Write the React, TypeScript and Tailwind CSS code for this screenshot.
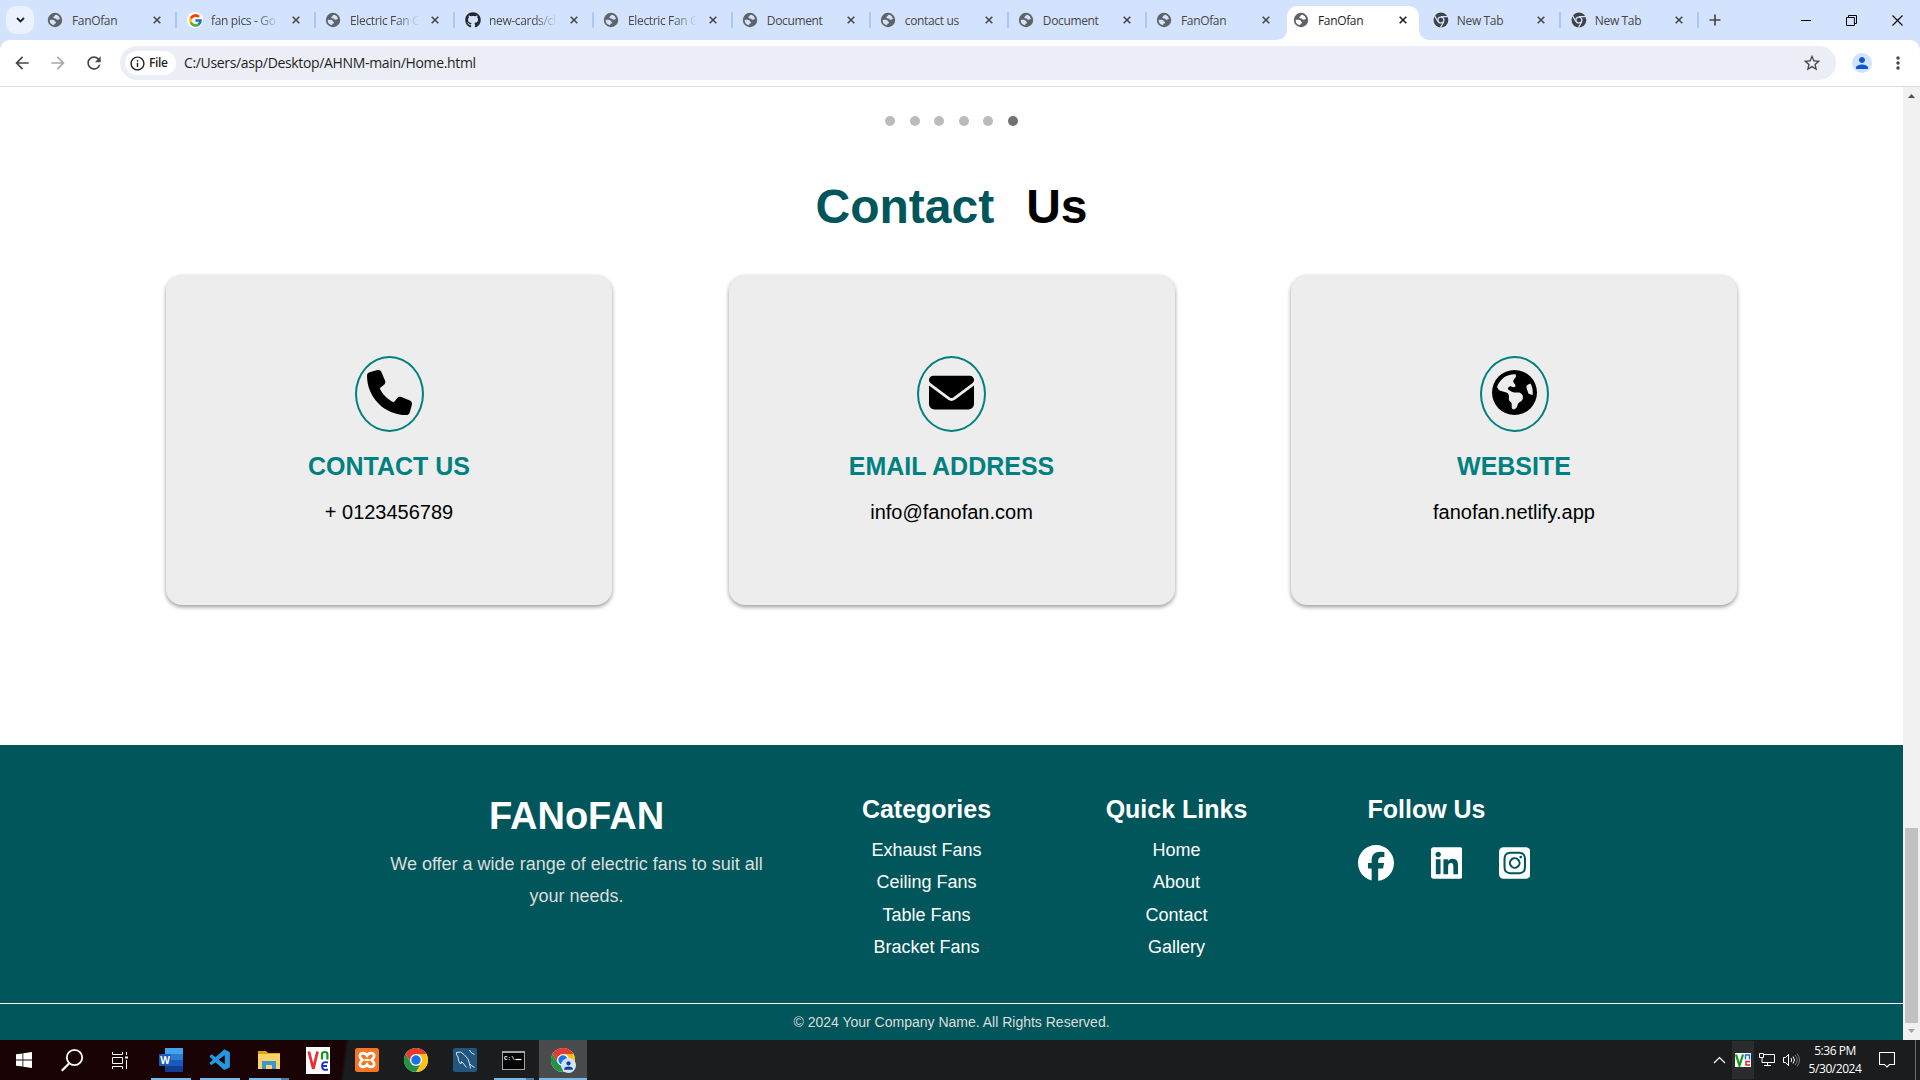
import React from "react";
import {
  FaPhone,
  FaEnvelope,
  FaEarthAmericas,
  FaFacebook,
  FaLinkedin,
  FaSquareInstagram,
} from "react-icons/fa6";
import { MdStarBorder, MdArrowBack, MdArrowForward, MdRefresh, MdInfoOutline, MdMoreVert, MdPerson } from "react-icons/md";
import { FaGithub } from "react-icons/fa";
import { FcGoogle } from "react-icons/fc";
import { VscVscode } from "react-icons/vsc";

const ui = "font-['Open_Sans','Noto_Sans',sans-serif]";

function CloseX({ dark }: { dark?: boolean }) {
  return (
    <svg width="8" height="8" viewBox="0 0 8 8" className={dark ? "text-[#1f1f1f]" : "text-[#474747]"}>
      <path d="M.7.7 7.3 7.3M7.3.7.7 7.3" stroke="currentColor" strokeWidth="1.6" />
    </svg>
  );
}

function ChromeGrey() {
  return (
    <svg width="16" height="16" viewBox="0 0 16 16">
      <circle cx="8" cy="8" r="7.5" fill="#3f4246" />
      <circle cx="8" cy="8" r="3" fill="#3f4246" stroke="#d3e3fd" strokeWidth="1.3" />
      <path d="M8 4.6h7M5.1 9.7 1.7 3.8M10.9 9.7l-3.4 6" stroke="#d3e3fd" strokeWidth="1.2" />
    </svg>
  );
}

function GlobeGrey({ land }: { land: string }) {
  return (
    <svg width="16" height="16" viewBox="0 0 16 16" className="-ml-px">
      <circle cx="8" cy="8" r="7.200" fill="#5f6368" />
      <path
        d="M9.500 2.800Q7.200 2.900 7.400 4.300Q6.200 4.600 6.400 5.800Q6.800 6.800 8.600 6.500Q9.600 6.600 9.700 7.700Q11.200 8.200 11.700 7.200L13 7A5.300 5.300 0 0 0 9.500 2.800z"
        fill={land}
      />
      <path
        d="M2.700 7.700H5.500Q8 7.800 7.900 9.300Q9.200 9.900 9 11.200Q7 11.200 7 13.200A5.300 5.300 0 0 1 2.700 7.700z"
        fill={land}
      />
    </svg>
  );
}

function ChromeLogo({ size }: { size: number }) {
  return (
    <svg width={size} height={size} viewBox="0 0 48 48">
      <circle cx="24" cy="24" r="24" fill="#fff" />
      <path d="M24 12h20.8A24 24 0 0 0 3.2 12l10.4 18z" fill="#e33b2e" />
      <path d="M34.4 30 24 48A24 24 0 0 0 44.8 12H24z" fill="#fbc116" />
      <path d="M13.6 30 3.2 12A24 24 0 0 0 24 48l10.4-18z" fill="#229342" />
      <circle cx="24" cy="24" r="12" fill="#fff" />
      <circle cx="24" cy="24" r="9.5" fill="#1a73e8" />
    </svg>
  );
}

function Favicon({ kind, active }: { kind: string; active?: boolean }) {
  if (kind === "google")
    return (
      <span className="grid size-4 place-items-center rounded-full bg-white">
        <FcGoogle size={15} />
      </span>
    );
  if (kind === "github") return <FaGithub size={16} color="#24292f" />;
  if (kind === "chrome") return <ChromeGrey />;
  return (
    <span className="w-4">
      <GlobeGrey land={active ? "#ffffff" : "#d3e3fd"} />
    </span>
  );
}

const tabs = [
  { icon: "globe", title: "FanOfan", sep: true, w: "w-[139px]" },
  { icon: "google", title: "fan pics - Go", fade: true, sep: true, w: "w-[139px]" },
  { icon: "globe", title: "Electric Fan G", fade: true, sep: true, w: "w-[139px]" },
  { icon: "github", title: "new-cards/cl", fade: true, sep: true, w: "w-[139px]" },
  { icon: "globe", title: "Electric Fan G", fade: true, sep: true, w: "w-[139px]" },
  { icon: "globe", title: "Document", sep: true, w: "w-[138px]" },
  { icon: "globe", title: "contact us", sep: true, w: "w-[138px]" },
  { icon: "globe", title: "Document", sep: true, w: "w-[138px]" },
  { icon: "globe", title: "FanOfan", sep: false, w: "w-[137px]" },
  { icon: "globe", title: "FanOfan", sep: false, w: "w-[139px]", active: true },
  { icon: "chrome", title: "New Tab", sep: true, w: "w-[138px]" },
  { icon: "chrome", title: "New Tab", sep: true, w: "w-[138px]" },
];

function TabStrip() {
  return (
    <div className="flex h-10 items-center bg-[#d3e3fd] pl-1.5">
      <button className="grid size-7 place-items-center rounded-[10px] bg-[#ebf2fe]">
        <svg width="9" height="6" viewBox="0 0 9 6">
          <path d="M1 1l3.500 3.500L8 1" fill="none" stroke="#1f1f1f" strokeWidth="1.8" />
        </svg>
      </button>
      <div className="ml-1 flex h-10">
        {tabs.map((t, i) => (
          <div key={i} className={`relative h-10 ${t.w}`}>
            {t.active && (
              <>
                <div className="absolute top-1.5 bottom-0 left-[3px] w-[132px] rounded-t-[10px] bg-white" />
                <svg className="absolute bottom-0 -left-[7px]" width="10" height="10" viewBox="0 0 10 10">
                  <path d="M10 0v10H0A10 10 0 0 0 10 0z" fill="#fff" />
                </svg>
                <svg className="absolute bottom-0 left-[135px]" width="10" height="10" viewBox="0 0 10 10">
                  <path d="M0 0v10h10A10 10 0 0 1 0 0z" fill="#fff" />
                </svg>
              </>
            )}
            <div className="relative flex h-10 items-center pl-[10px]">
              <Favicon kind={t.icon} active={t.active} />
              <span
                className={`mt-px ml-2 w-[69px] text-[12px] leading-4 tracking-[-0.35px] whitespace-nowrap ${ui} ${t.active ? "text-[#1f1f1f]" : "text-[#474747]"} ${t.fade ? "[mask-image:linear-gradient(to_right,#000_65%,transparent)]" : ""}`}
              >
                {t.title}
              </span>
              <span className="ml-[12px] flex">
                <CloseX dark={t.active} />
              </span>
              {t.sep && <span className="ml-[14px] h-4 w-[2px] rounded bg-[#a8c7fa]" />}
            </div>
          </div>
        ))}
      </div>
      <svg className="ml-[10px]" width="12" height="12" viewBox="0 0 12 12">
        <path d="M6 .5v11M.5 6h11" stroke="#474747" strokeWidth="1.700" />
      </svg>
      <div className="mr-[17px] ml-auto flex items-center gap-[35px] text-black">
        <svg width="10" height="11" viewBox="0 0 10 11" className="-ml-px">
          <path d="M0 5.500h10" stroke="currentColor" />
        </svg>
        <svg width="11" height="11" viewBox="0 0 11 11">
          <path d="M.5 2.500h7.900v8H.5zM2.500 2.500V.5h8v8h-2" fill="none" stroke="currentColor" />
        </svg>
        <svg width="11" height="11" viewBox="0 0 11 11">
          <path d="M.5.5l10 10M10.500.5l-10 10" stroke="currentColor" strokeWidth="1.100" />
        </svg>
      </div>
    </div>
  );
}

function Toolbar() {
  return (
    <div className="bg-[#d3e3fd]">
      <div className="flex h-[47px] items-center rounded-t-[10px] border-b border-[#dcdcdc] bg-white pl-3">
        <MdArrowBack size={20} color="#474747" />
        <MdArrowForward size={20} color="#a8a8a8" className="ml-4" />
        <MdRefresh size={20} color="#474747" className="ml-4" />
        <div className="ml-4 flex h-[34px] w-[1716px] items-center rounded-full bg-[#ebeef7] pr-[14px] pl-[5px]">
          <div className="flex h-6 w-[51px] items-center rounded-full bg-white pl-1">
            <MdInfoOutline size={17} color="#1f1f1f" />
            <span className={`ml-[3px] text-[12px] font-semibold tracking-[-0.4px] text-[#1f1f1f] ${ui}`}>File</span>
          </div>
          <span className={`-mt-px ml-2 text-[14px] tracking-[-0.34px] text-[#1f1f1f] ${ui}`}>
            C:/Users/asp/Desktop/AHNM-main/Home.html
          </span>
          <MdStarBorder size={20} color="#474747" className="ml-auto" />
        </div>
        <div className="ml-[16px] grid size-5 place-items-center rounded-full bg-[#d3e3fd]">
          <MdPerson size={18} color="#0b57d0" />
        </div>
        <MdMoreVert size={20} color="#474747" className="ml-[16px]" />
      </div>
    </div>
  );
}

const cards = [
  { Icon: FaPhone, title: "CONTACT US", text: "+ 0123456789" },
  { Icon: FaEnvelope, title: "EMAIL ADDRESS", text: "info@fanofan.com" },
  { Icon: FaEarthAmericas, title: "WEBSITE", text: "fanofan.netlify.app" },
];

function ContactSection() {
  return (
    <section className="h-[658px] bg-white">
      <div className="flex justify-center gap-[14.6px] pt-[29px]">
        {[0, 1, 2, 3, 4, 5].map((i) => (
          <span key={i} className={`size-[10px] rounded-full ${i === 5 ? "bg-[#717171]" : "bg-[#bbbbbb]"}`} />
        ))}
      </div>
      <h2 className="mt-[53px] flex justify-center gap-[32px] text-[48px] leading-[56px] font-bold">
        <span className="text-[#00565b]">Contact</span>
        <span className="text-black">Us</span>
      </h2>
      <div className="mx-[166px] mt-[40px] grid grid-cols-3 gap-x-[116.500px]">
        {cards.map(({ Icon, title, text }) => (
          <div
            key={title}
            className="flex h-[330px] flex-col items-center rounded-[16px] bg-[#ededed] pt-[81px] shadow-[0_2px_4px_rgba(0,0,0,0.4)]"
          >
            <div className="flex h-[76px] w-[69px] justify-center rounded-[50%] border-2 border-[#008080] pt-[12px]">
              <Icon size={45} color="#000" />
            </div>
            <h3 className="mt-[19px] text-[25px] leading-[30px] font-bold text-[#008080]">{title}</h3>
            <p className="mt-[19px] text-[20px] leading-[24px] text-black">{text}</p>
          </div>
        ))}
      </div>
    </section>
  );
}

function LinkColumn({ title, links }: { title: string; links: string[] }) {
  return (
    <div className="w-[250px] pt-[50px]">
      <h3 className="text-[25px] leading-[29px] font-bold">{title}</h3>
      <ul className="mt-[10px] text-[18px] leading-[32.4px]">
        {links.map((l) => (
          <li key={l}>{l}</li>
        ))}
      </ul>
    </div>
  );
}

function Footer() {
  return (
    <footer className="flex h-[295px] flex-col bg-[#00565b] text-center text-white">
      <div className="flex h-[258px] pl-[351.500px]">
        <div className="w-[450px] px-[30px] pt-[48px]">
          <h2 className="text-[38px] leading-[46px] font-bold">FANoFAN</h2>
          <p className="mt-[9px] text-[18px] leading-[32.4px] text-[#dddddd]">
            We offer a wide range of electric fans to suit all your needs.
          </p>
        </div>
        <LinkColumn title="Categories" links={["Exhaust Fans", "Ceiling Fans", "Table Fans", "Bracket Fans"]} />
        <LinkColumn title="Quick Links" links={["Home", "About", "Contact", "Gallery"]} />
        <div className="w-[250px] pt-[50px]">
          <h3 className="text-[25px] leading-[29px] font-bold">Follow Us</h3>
          <div className="mt-[21px] ml-[56.500px] flex gap-[36.500px]">
            <FaFacebook className="h-9 w-9" />
            <FaLinkedin className="h-9 w-[31.5px]" />
            <FaSquareInstagram className="h-9 w-[31.5px]" />
          </div>
        </div>
      </div>
      <div className="border-t border-white pt-[9px] text-[14px] leading-[18px] text-[#dddddd]">
        © 2024 Your Company Name. All Rights Reserved.
      </div>
    </footer>
  );
}

function Scrollbar() {
  return (
    <div className="flex w-[17px] flex-col items-center bg-[#f1f1f1]">
      <svg width="17" height="17" viewBox="0 0 17 17">
        <path d="M5 11h7L8.500 7z" fill="#505050" />
      </svg>
      <div className="mt-auto h-[195px] w-[13px] bg-[#c1c1c1]" />
      <svg width="17" height="17" viewBox="0 0 17 17">
        <path d="M5 6h7l-3.500 4z" fill="#a3a3a3" />
      </svg>
    </div>
  );
}

function VncIcon() {
  return (
    <svg width="24" height="27" viewBox="0 0 24 27">
      <rect width="24" height="27" fill="#fff" />
      <path d="M2.800 4.500 7.300 22 11.500 4.500" fill="none" stroke="#ee2d35" strokeWidth="2.800" strokeLinejoin="bevel" />
      <path d="M16 12.500V7q0-2 2.700-2t2.700 2v5.500" fill="none" stroke="#0a9a1c" strokeWidth="2.200" />
      <path d="M22 15.500q-6-1.500-6 3.500t6 3.500M16 19h5" fill="none" stroke="#1b2fd0" strokeWidth="1.900" />
    </svg>
  );
}

function XamppIcon() {
  return (
    <svg width="24" height="24" viewBox="0 0 24 24">
      <rect width="24" height="24" rx="2.500" fill="#f37623" />
      <path
        d="M12 7.500C10 4 4.800 4.500 4.800 8C4.800 10.200 6.800 11 7.600 12C6.800 13 4.800 13.800 4.800 16C4.800 19.500 10 20 12 16.500C14 20 19.200 19.500 19.200 16C19.200 13.800 17.200 13 16.400 12C17.200 11 19.200 10.200 19.200 8C19.200 4.500 14 4 12 7.500z"
        fill="none"
        stroke="#fff"
        strokeWidth="2.600"
      />
      <path d="M9.500 12h5" stroke="#fff" strokeWidth="2.200" />
    </svg>
  );
}

const apps: { id: string; underline?: boolean; split?: boolean; active?: boolean; el: React.ReactNode }[] = [
  {
    id: "start",
    el: (
      <svg width="16" height="16" viewBox="0 0 16 16" fill="#fff">
        <path d="M0 2.300 6.500 1.400V7.600H0zM7.300 1.300 16 0v7.600H7.300zM0 8.400h6.500v6.200L0 13.700zM7.300 8.400H16V16l-8.700-1.300z" />
      </svg>
    ),
  },
  {
    id: "search",
    el: (
      <svg width="24" height="24" viewBox="0 0 24 24" fill="none" stroke="#fff" strokeWidth="1.800" className="-ml-0.5">
        <circle cx="14.500" cy="9.500" r="7.700" />
        <path d="M9 15.500 1.800 22.700" strokeWidth="2.200" />
      </svg>
    ),
  },
  {
    id: "taskview",
    el: (
      <svg width="17" height="17" viewBox="0 0 17 17" fill="none" stroke="#fff" className="-ml-1">
        <path d="M.5 0v2.500h10V0M.5 17v-2.500h10V17M.5 5.500h10v6H.5zM14.500 0v3M14.500 8v9" />
        <path d="M13 5.500h3" strokeWidth="2" />
      </svg>
    ),
  },
  {
    id: "word",
    underline: true,
    el: (
      <svg width="24" height="24" viewBox="0 0 24 24">
        <path d="M6 0h18v6H6z" fill="#41a5ee" />
        <path d="M6 6h18v6H6z" fill="#2b7cd3" />
        <path d="M6 12h18v6H6z" fill="#185abd" />
        <path d="M6 18h18v6H6z" fill="#103f91" />
        <rect y="6" width="12" height="12" rx="1" fill="#1b5cbe" />
        <text x="6" y="15.500" fontSize="10" fontWeight="bold" fill="#fff" textAnchor="middle" fontFamily="Open Sans">W</text>
      </svg>
    ),
  },
  {
    id: "vscode",
    underline: true,
    el: <VscVscode size={25} color="#2397e0" />,
  },
  {
    id: "explorer",
    underline: true,
    split: true,
    el: (
      <svg width="22" height="20" viewBox="0 0 22 20">
        <path d="M0 1h8l2 2h12v5H0z" fill="#e5a313" />
        <path d="M0 4h22v15H0z" fill="#fcd364" />
        <path d="M4 19v-8h14v8h-4v-4H8v4z" fill="#3a95db" />
      </svg>
    ),
  },
  { id: "vnc", el: <VncIcon /> },
  { id: "xampp", el: <XamppIcon /> },
  { id: "chrome", el: <ChromeLogo size={24} /> },
  {
    id: "mysql",
    el: (
      <svg width="24" height="24" viewBox="0 0 24 24">
        <rect width="24" height="24" rx="2" fill="#22567f" />
        <path
          d="M3.500 4.500Q8 2.500 11 6.500Q16 10.500 16.500 15.500Q18 17.500 21.500 19.500M3.500 4.500Q3 7 5 9Q5 13 7.500 16Q8.500 15.500 8.500 13.500Q11 16 13.500 19.500M16.500 15.500L17.500 20.500M16.500 2L18 4.500L21.500 6.500"
          fill="none"
          stroke="#dbe7f0"
          strokeWidth="1"
        />
      </svg>
    ),
  },
  {
    id: "cmd",
    underline: true,
    split: true,
    el: (
      <svg width="23" height="19" viewBox="0 0 23 19" className="-ml-px">
        <rect width="23" height="19" fill="#a5a5a5" />
        <rect x="1" y="2" width="21" height="16" fill="#050505" />
        <text x="2" y="9" fontSize="6" fontWeight="bold" fill="#fff" fontFamily="Liberation Mono">C:\</text>
        <path d="M13.500 8.500h6" stroke="#fff" strokeWidth="1.200" />
      </svg>
    ),
  },
  {
    id: "chrome-profile",
    underline: true,
    active: true,
    el: (
      <span className="relative size-6">
        <ChromeLogo size={24} />
        <span className="absolute top-[10px] left-[10px] grid size-[15px] place-items-center rounded-full bg-[#d3e3fd]">
          <MdPerson size={13} color="#0b3f9a" />
        </span>
      </span>
    ),
  },
];

function Taskbar() {
  return (
    <div className={`flex h-10 bg-[linear-gradient(98deg,#190304_342px,#1a1c1e_346px)] text-white ${ui}`}>
      <div className="flex">
        {apps.map((a) => (
          <div key={a.id} className="h-10 w-[49px]">
            <div className={`flex h-10 w-12 flex-col items-center ${a.active ? "bg-[#4a4b4d]" : ""}`}>
              <div className="grid h-[38px] place-items-center pt-0.5">{a.el}</div>
              {a.underline && (
                <div className={`flex h-0.5 bg-[#76b9ed] ${a.active ? "w-12" : "w-10"}`}>
                  {a.split && <span className="ml-auto w-2 bg-[#4f7ca0]" />}
                </div>
              )}
            </div>
          </div>
        ))}
      </div>
      <div className="ml-auto flex items-center">
        <svg width="13" height="8" viewBox="0 0 13 8" fill="none" stroke="#fff" strokeWidth="1.200">
          <path d="M1 7l5.500-5.500L12 7" />
        </svg>
        <div className="ml-[6px] grid h-[38px] w-[22px] place-items-center bg-[#2a2c2e]">
          <svg width="16" height="14" viewBox="0 0 16 14">
            <rect width="16" height="14" fill="#fff" />
            <path d="M1 1.500l3.500 11L8 1.500" fill="none" stroke="#0a9a1c" strokeWidth="2.200" />
            <path d="M10.500 6.500V2h4v4.500" fill="none" stroke="#1b6fe0" strokeWidth="1.500" />
            <path d="M15 8.500h-4V12h4" fill="none" stroke="#e8202a" strokeWidth="1.500" />
          </svg>
        </div>
        <svg className="ml-[5px]" width="16" height="14" viewBox="0 0 16 14" fill="none" stroke="#fff">
          <path d="M5 1.500h10.500v8H3V5M.5.5h4v4h-4zM5 12.500h7M8.500 9.500v3" />
        </svg>
        <svg className="ml-[8px]" width="17" height="14" viewBox="0 0 17 14" fill="none" stroke="#fff">
          <path d="M.5 4.500H2.500l3-3v11l-3-3H.5z" />
          <path d="M8 5q1.500 2 0 4M10 3.500q3 3.500 0 7" />
          <path d="M12 2q4.500 5 0 10M14 .5q5 6.500 0 13" stroke="#77797b" />
        </svg>
        <div className="ml-[8px] w-[54px] text-center text-[12px] leading-[18px] tracking-[-0.45px] whitespace-nowrap">
          <div>5:36 PM</div>
          <div>5/30/2024</div>
        </div>
        <svg className="ml-[17px]" width="16" height="16" viewBox="0 0 16 16" fill="none" stroke="#fff" strokeWidth="1.100">
          <path d="M.5.5h15v12H10.500L8 15l-2.500-2.500H.5z" />
        </svg>
        <div className="ml-[20px] h-10 w-px bg-[#6b6d6f]" />
        <div className="w-1" />
      </div>
    </div>
  );
}

export default function App() {
  return (
    <div className="flex h-[1080px] w-[1920px] flex-col overflow-hidden bg-white font-['Liberation_Sans',Arial,sans-serif]">
      <TabStrip />
      <Toolbar />
      <div className="flex h-[953px]">
        <main className="w-[1903px]">
          <ContactSection />
          <Footer />
        </main>
        <Scrollbar />
      </div>
      <Taskbar />
    </div>
  );
}
